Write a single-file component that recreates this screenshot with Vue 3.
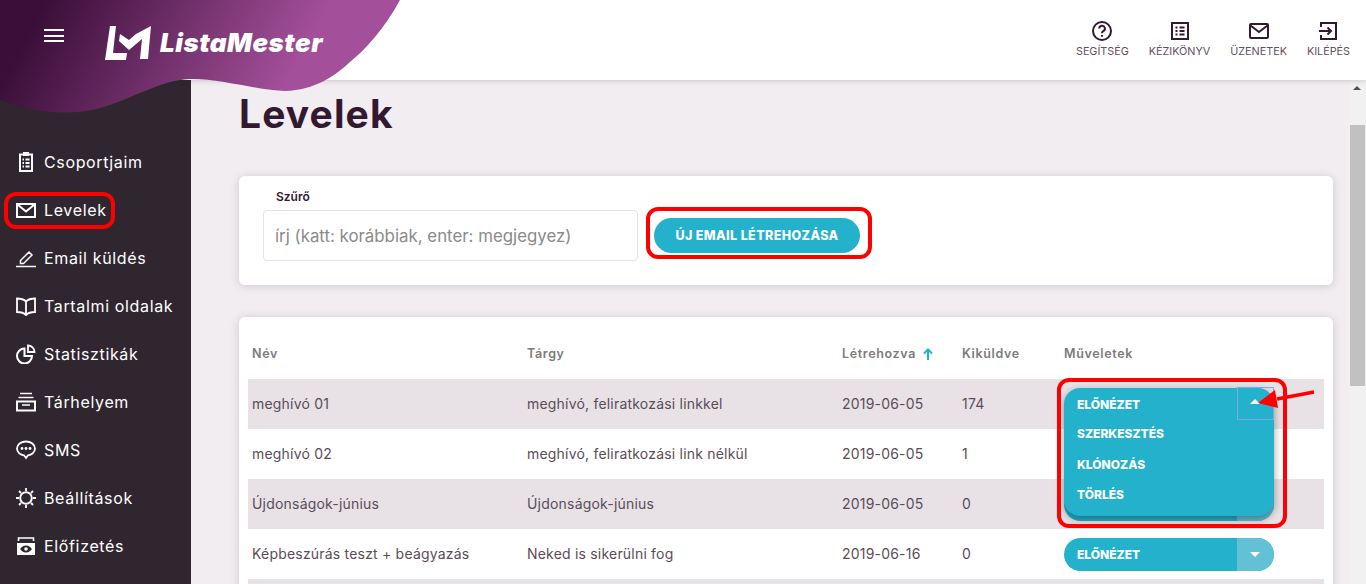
<script setup>
const nav = [
  { label: 'Csoportjaim', icon: 'clip' },
  { label: 'Levelek', icon: 'mail' },
  { label: 'Email küldés', icon: 'pen' },
  { label: 'Tartalmi oldalak', icon: 'book' },
  { label: 'Statisztikák', icon: 'pie' },
  { label: 'Tárhelyem', icon: 'box' },
  { label: 'SMS', icon: 'chat' },
  { label: 'Beállítások', icon: 'gear' },
  { label: 'Előfizetés', icon: 'money' }
]
const rows = [
  ['meghívó 01', 'meghívó, feliratkozási linkkel', '2019-06-05', '174'],
  ['meghívó 02', 'meghívó, feliratkozási link nélkül', '2019-06-05', '1'],
  ['Újdonságok-június', 'Újdonságok-június', '2019-06-05', '0'],
  ['Képbeszúrás teszt + beágyazás', 'Neked is sikerülni fog', '2019-06-16', '0'],
  ['', '', '', '']
]
</script>

<template>
  <div class="app">
    <header class="top">
      <svg class="blob" width="400" height="116" viewBox="0 0 400 116">
        <defs>
          <linearGradient id="bg" x1="40" y1="10" x2="260" y2="130" gradientUnits="userSpaceOnUse">
            <stop offset="0" stop-color="#3a0e38" />
            <stop offset="1" stop-color="#a34f99" />
          </linearGradient>
        </defs>
        <path fill="url(#bg)" d="M0 0H400C385 28 365 50 350 62C335 76 315 90 285 91C260 91 225 79 190 79C160 80 130 100 100 108C70 117 30 112 0 100Z" />
      </svg>
      <button class="burger" aria-label="Menü"><span></span><span></span><span></span></button>
      <div class="logo">
        <svg width="46" height="34" viewBox="0 0 46 34">
          <path fill="#fff" d="M5 0H11L8 27H22L21 34H0Z" />
          <path fill="#fff" d="M15 8L24 14L31 8L46 0L43 33H35L37 13L24 24L14 15Z" />
        </svg>
        <span>ListaMester</span>
      </div>
      <div class="tools">
        <div class="tool">
          <svg width="22" height="22" viewBox="0 0 22 22" fill="none" stroke="#32192f" stroke-width="2">
            <circle cx="11" cy="11" r="9" />
            <path d="M8.3 8.6a2.8 2.8 0 1 1 4 2.5c-.9.5-1.3 1-1.3 2.1" />
            <path d="M11 15v1.8" />
          </svg>
          <span>SEGÍTSÉG</span>
        </div>
        <div class="tool">
          <svg width="22" height="22" viewBox="0 0 22 22" fill="none" stroke="#32192f" stroke-width="2">
            <rect x="3" y="3" width="16" height="16" />
            <path d="M6.5 7.5h2M10.5 7.5h5M6.5 11h2M10.5 11h5M6.5 14.5h2M10.5 14.5h5" />
          </svg>
          <span>KÉZIKÖNYV</span>
        </div>
        <div class="tool">
          <svg width="22" height="22" viewBox="0 0 22 22" fill="none" stroke="#32192f" stroke-width="2">
            <rect x="2" y="4" width="18" height="14" rx="1" />
            <path d="M2.5 5.5L11 12L19.5 5.5" />
          </svg>
          <span>ÜZENETEK</span>
        </div>
        <div class="tool">
          <svg width="22" height="22" viewBox="0 0 22 22" fill="none" stroke="#32192f" stroke-width="2">
            <path d="M4 7V3H19V19H4V15" />
            <path d="M2 11H14M10.5 7.5L14 11L10.5 14.5" />
          </svg>
          <span>KILÉPÉS</span>
        </div>
      </div>
    </header>

    <div class="body">
      <aside class="side">
        <div v-for="n in nav" :key="n.label" class="nav">
          <svg width="20" height="20" viewBox="0 0 20 20" fill="none" stroke="#fff" stroke-width="2">
            <template v-if="n.icon === 'clip'">
              <path d="M7 2.5H4V19H16V2.5H13" />
              <rect x="7" y="0" width="6" height="4" fill="#fff" stroke="none" />
              <path stroke-width="1.8" d="M6.5 7.5H8M9.5 7.5H13.5M6.5 11H8M9.5 11H13.5M6.5 14.5H8M9.5 14.5H13.5" />
            </template>
            <template v-else-if="n.icon === 'mail'">
              <rect x="1" y="4" width="18" height="13" />
              <path d="M1.5 4.5L10 11.5L18.5 4.5" />
            </template>
            <template v-else-if="n.icon === 'pen'">
              <path stroke-width="1.5" d="M4.5 15.5V12.5L13 4L16 7L7.5 15.5Z" />
              <path stroke-width="1.5" d="M0 18.5H20" />
            </template>
            <template v-else-if="n.icon === 'book'">
              <path stroke-width="1.8" d="M10 5.5C8 3.5 4 2.5 1 2.5V16C4 16 8 17 10 19C12 17 16 16 19 16V2.5C16 2.5 12 3.5 10 5.5ZM10 5.5V19" />
            </template>
            <template v-else-if="n.icon === 'pie'">
              <path d="M8.5 4.5A7.5 7.5 0 1 0 16 12H8.5Z" />
              <path stroke-width="1.8" d="M12 1.5A6.5 6.5 0 0 1 18.5 8H12Z" />
            </template>
            <template v-else-if="n.icon === 'box'">
              <path stroke-width="1.5" d="M4 1.5H16M2.5 5.5H17.5" />
              <rect x="1" y="9.5" width="18" height="9" />
              <path stroke-width="1.5" d="M6 13H14" />
            </template>
            <template v-else-if="n.icon === 'chat'">
              <path stroke-width="1.8" d="M10 1.5C5 1.5 1 4.3 1 8.5C1 12.5 4.5 15 8 15.3L10 18L12 15.3C15.5 15 19 12.5 19 8.5C19 4.3 15 1.5 10 1.5Z" />
              <circle cx="6" cy="8.5" r="1.4" fill="#fff" stroke="none" />
              <circle cx="10" cy="8.5" r="1.4" fill="#fff" stroke="none" />
              <circle cx="14" cy="8.5" r="1.4" fill="#fff" stroke="none" />
            </template>
            <template v-else-if="n.icon === 'gear'">
              <circle cx="10" cy="10" r="5.8" />
              <path stroke-width="1.8" d="M10 0V3M10 17V20M0 10H3M17 10H20M3 3L5 5M15 15L17 17M3 17L5 15M15 5L17 3" />
            </template>
            <template v-else>
              <path stroke-width="1.6" d="M2.5 5V2H17.5V5" />
              <path fill="#fff" stroke="none" fill-rule="evenodd" d="M1 7H19V19H1ZM10 9.5C7 9.5 5 11.5 4.2 13C5 14.5 7 16.5 10 16.5C13 16.5 15 14.5 15.8 13C15 11.5 13 9.5 10 9.5Z" />
              <circle cx="10" cy="13" r="1.8" fill="#fff" stroke="none" />
            </template>
          </svg>
          <span>{{ n.label }}</span>
        </div>
      </aside>

      <main class="main">
        <h1>Levelek</h1>
        <section class="card filter">
          <label>Szűrő</label>
          <div class="filter-row">
            <input type="text" placeholder="írj (katt: korábbiak, enter: megjegyez)" />
            <button class="new">ÚJ EMAIL LÉTREHOZÁSA</button>
          </div>
        </section>
        <section class="card list">
          <div class="row head">
            <div>Név</div>
            <div>Tárgy</div>
            <div class="sort">Létrehozva
              <svg width="12" height="12" viewBox="0 0 12 12" fill="none" stroke="#24b1cc" stroke-width="2"><path d="M6 12V2M2 5.5L6 1.5L10 5.5" /></svg>
            </div>
            <div>Kiküldve</div>
            <div>Műveletek</div>
          </div>
          <div v-for="(r, i) in rows" :key="i" class="row item">
            <div class="cell">{{ r[0] }}</div>
            <div class="cell">{{ r[1] }}</div>
            <div class="cell">{{ r[2] }}</div>
            <div class="cell">{{ r[3] }}</div>
            <div class="actions">
              <div v-if="r[0] && i > 1" class="split">
                <span v-if="i > 2" class="main-act">ELŐNÉZET</span>
                <span v-else class="main-act"></span>
                <span class="caret"></span>
              </div>
              <div v-if="i === 0" class="menu">
                <span class="m1">ELŐNÉZET</span>
                <span class="m2">SZERKESZTÉS</span>
                <span class="m3">KLÓNOZÁS</span>
                <span class="m4">TÖRLÉS</span>
                <i class="focus"><b></b></i>
              </div>
            </div>
          </div>
        </section>
      </main>

      <div class="scrollbar">
        <span class="up"></span>
        <span class="thumb"></span>
      </div>
    </div>

    <i class="mark mark-nav"></i>
    <i class="mark mark-new"></i>
    <i class="mark mark-menu"></i>
    <svg class="arrow" width="60" height="20" viewBox="0 0 60 20">
      <path d="M57 3L20 10" stroke="#f00" stroke-width="3.5" fill="none" />
      <path d="M1 14L18 1L21 19Z" fill="#f00" />
    </svg>
  </div>
</template>

<style scoped>
.app {
  position: relative;
  width: 1366px;
  height: 584px;
  overflow: hidden;
  display: flex;
  flex-direction: column;
  font-family: Inter, "Noto Sans", sans-serif;
  background: #f1edf1;
}
.top {
  position: relative;
  z-index: 3;
  height: 80px;
  flex: none;
  background: #fff;
  box-shadow: 0 1px 5px rgba(50, 25, 47, .18);
  display: flex;
  align-items: flex-start;
}
.blob {
  position: absolute;
  left: 0;
  top: 0;
}
.burger {
  position: relative;
  margin: 29px 0 0 44px;
  width: 20px;
  height: 13px;
  padding: 0;
  border: 0;
  background: none;
  display: flex;
  flex-direction: column;
  justify-content: space-between;
}
.burger span {
  display: block;
  height: 2px;
  background: #fff;
}
.logo {
  position: relative;
  margin: 26px 0 0 41px;
  display: flex;
  align-items: center;
  gap: 9px;
  color: #fff;
  font-size: 26px;
  font-weight: 900;
  font-style: italic;
  letter-spacing: .5px;
  line-height: 34px;
}
.tools {
  margin-left: auto;
  padding: 20px 16px 0 0;
  display: flex;
  gap: 20px;
}
.tool {
  display: flex;
  flex-direction: column;
  align-items: center;
  gap: 3px;
  font-size: 10.8px;
  line-height: 14px;
  color: #62505f;
}
.body {
  flex: 1;
  min-height: 0;
  display: flex;
}
.side {
  width: 191px;
  flex: none;
  background: #2f262f;
  padding-top: 58px;
  box-sizing: border-box;
}
.nav {
  height: 48px;
  padding-left: 16px;
  display: flex;
  align-items: center;
  gap: 8px;
  color: #fff;
  font-size: 16px;
  letter-spacing: .65px;
}
.main {
  flex: 1;
  min-width: 0;
  padding: 0 16px 0 48px;
}
h1 {
  margin: 9px 0 0;
  font-size: 39px;
  line-height: 50px;
  font-weight: 700;
  letter-spacing: 1.1px;
  color: #32192f;
}
.card {
  background: #fff;
  border-radius: 6px;
  box-shadow: 0 1px 10px rgba(60, 40, 60, .18);
}
.filter {
  margin-top: 37px;
  height: 109px;
  padding: 13px 24px 0;
  box-sizing: border-box;
}
.filter label {
  display: block;
  margin-left: 13px;
  font-size: 12px;
  line-height: 15px;
  font-weight: 600;
  color: #32192f;
}
.filter-row {
  margin-top: 6px;
  display: flex;
  align-items: center;
  gap: 16px;
}
input {
  width: 375px;
  height: 51px;
  box-sizing: border-box;
  padding: 0 11px;
  border: 1px solid #e4e2e4;
  border-radius: 4px;
  background: #fff;
  font: 16.85px Inter, "Noto Sans", sans-serif;
  outline: none;
}
input::placeholder {
  color: #8a8a8a;
  opacity: 1;
}
.new {
  width: 206px;
  height: 35px;
  padding: 0;
  border: 0;
  border-radius: 18px;
  background: #24b1cc;
  color: #fff;
  font: 800 12.5px Inter, "Noto Sans", sans-serif;
  letter-spacing: .4px;
}
.list {
  margin-top: 32px;
  padding: 12px 9px 0;
}
.row {
  display: grid;
  grid-template-columns: 275px 315px 120px 102px 1fr;
  padding-left: 4px;
  align-items: center;
  height: 50px;
}
.head {
  font-size: 12.5px;
  font-weight: 600;
  color: #7c7c7c;
  letter-spacing: .65px;
}
.head > div {
  padding-bottom: 2px;
}
.sort svg {
  margin-left: 2px;
  vertical-align: -2px;
}
.item {
  font-size: 14px;
  letter-spacing: .2px;
  color: #5a4d58;
}
.cell {
  padding-bottom: 2px;
}
.item:nth-child(even) {
  background: #e8e2e7;
}
.actions {
  position: relative;
  min-height: 33px;
}
.split {
  width: 210px;
  height: 33px;
  border-radius: 17px;
  overflow: hidden;
  display: flex;
  align-items: center;
  background: #24b1cc;
  color: #fff;
  font-size: 12px;
  font-weight: 800;
  letter-spacing: 0;
}
.main-act {
  flex: 1;
  padding-left: 13px;
}
.caret {
  position: relative;
  width: 37px;
  height: 100%;
  background: #63c1d6;
}
.caret::after {
  content: "";
  position: absolute;
  left: 13px;
  top: 14px;
  border: 5.5px solid transparent;
  border-top-color: #fff;
  border-bottom: 0;
}
.menu {
  position: absolute;
  z-index: 2;
  left: 0;
  top: 0;
  width: 210px;
  height: 128px;
  border-radius: 16px;
  background: #24b1cc;
  box-shadow: 0 3px 8px rgba(0, 0, 0, .38);
  color: #fff;
  font-size: 12px;
  font-weight: 800;
  letter-spacing: 0;
}
.menu span {
  position: absolute;
  left: 13px;
  line-height: 16px;
}
.m1 { top: 9px; }
.m2 { top: 38px; }
.m3 { top: 69px; }
.m4 { top: 99px; }
.focus {
  position: absolute;
  left: 173px;
  top: -1px;
  width: 37px;
  height: 33px;
  box-sizing: border-box;
  border: 1px solid #7fa8ea;
}
.focus b {
  position: absolute;
  left: 12px;
  top: 11px;
  border: 5.5px solid transparent;
  border-bottom-color: #fff;
  border-top: 0;
}
.scrollbar {
  position: relative;
  width: 17px;
  flex: none;
  background: #f1f1f1;
}
.up {
  position: absolute;
  left: 4px;
  top: 6px;
  border: 4px solid transparent;
  border-bottom-color: #505050;
  border-top: 0;
}
.thumb {
  position: absolute;
  left: 1px;
  top: 45px;
  width: 15px;
  height: 261px;
  background: #c1c1c1;
}
.mark {
  position: absolute;
  z-index: 4;
  box-sizing: border-box;
  border: 4px solid #f00;
  pointer-events: none;
}
.mark-nav {
  left: 4px;
  top: 192px;
  width: 111px;
  height: 37px;
  border-radius: 12px;
}
.mark-new {
  left: 646px;
  top: 207px;
  width: 226px;
  height: 52px;
  border-radius: 12px;
}
.mark-menu {
  left: 1057px;
  top: 378px;
  width: 230px;
  height: 150px;
  border-radius: 12px;
}
.arrow {
  position: absolute;
  z-index: 5;
  left: 1257px;
  top: 389px;
}
</style>
